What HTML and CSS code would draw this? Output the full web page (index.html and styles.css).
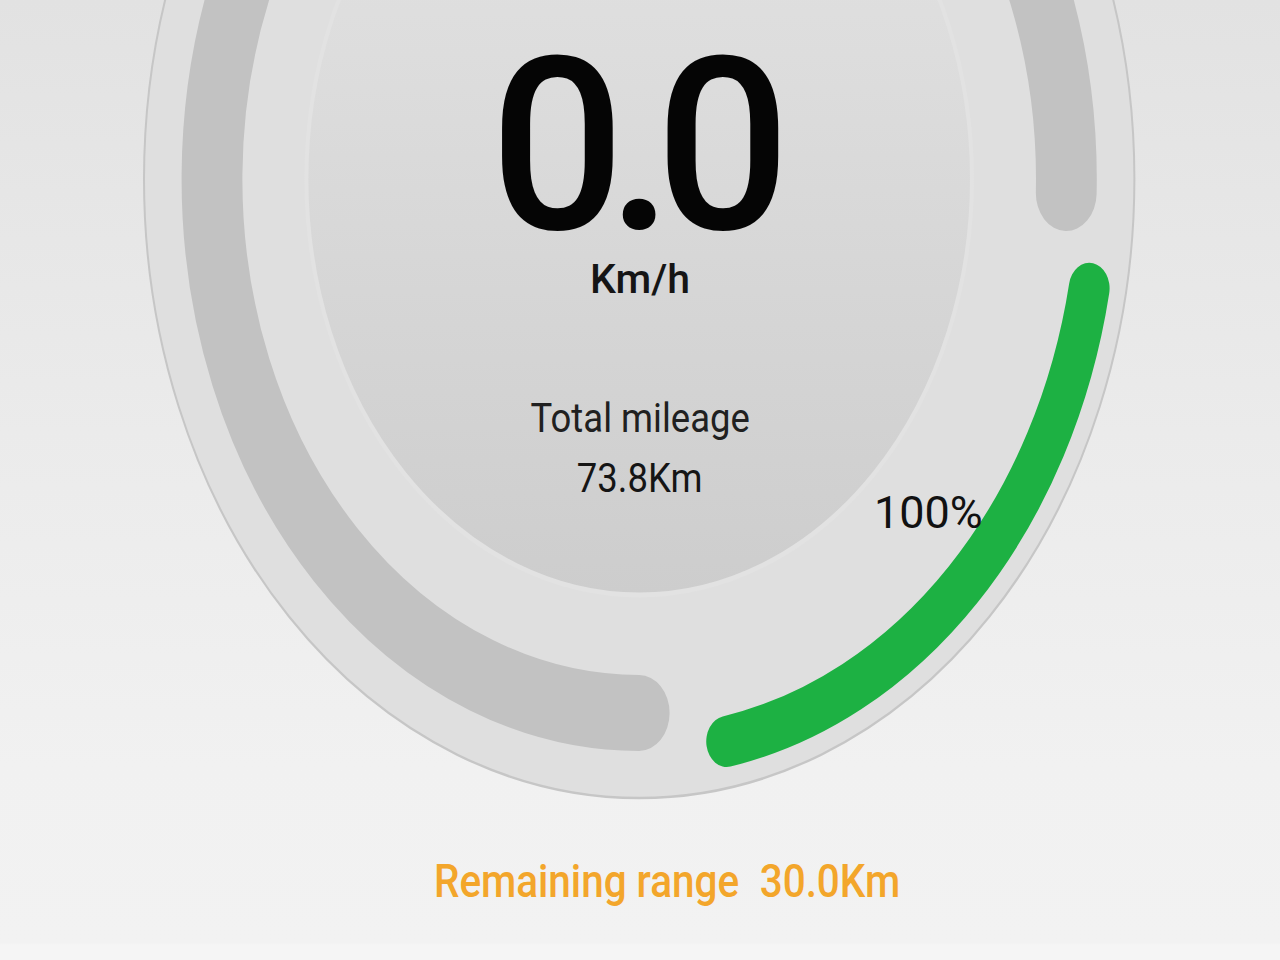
FILE: index.html
```html
<!DOCTYPE html>
<html lang="en">
<head>
  <meta charset="UTF-8">
  <meta name="viewport" content="width=device-width, initial-scale=1.0">
  <title>Speedometer</title>
  <link rel="stylesheet" href="styles.css">
</head>
<body>
  <div class="screen">
    <!-- the dial is drawn as circles, then stretched into the ellipse of the screen -->
    <svg class="dial" viewBox="0 0 1600 960" preserveAspectRatio="none">
      <defs>
        <linearGradient id="face" gradientUnits="userSpaceOnUse" x1="0" y1="-237" x2="0" y2="595">
          <stop offset="0" stop-color="#e4e4e4"/>
          <stop offset="0.35" stop-color="#dddddd"/>
          <stop offset="1" stop-color="#cdcdcd"/>
        </linearGradient>
      </defs>
      <circle class="rim" cx="799" cy="179" r="619"/>
      <path class="track" d="M 799 713 A 534 534 0 1 1 1332.8 193"/>
      <path class="charge" d="M 908.3 741.5 A 573 573 0 0 0 1361.5 288.3"/>
      <circle class="face" cx="799" cy="179" r="416"/>
    </svg>

    <div class="readout">
      <div class="speed">0.0</div>
      <div class="unit">Km/h</div>
      <div class="mileage-label">Total mileage</div>
      <div class="mileage-value">73.8Km</div>
      <div class="range">
        <span>Remaining range</span>
        <span>30.0Km</span>
      </div>
    </div>

    <div class="battery">100%</div>
  </div>
</body>
</html>
```

FILE: styles.css
```css
body {
  margin: 0px;
  font-family: 'Roboto', 'Liberation Sans', sans-serif;
  background-color: #f2f2f2;
}

.screen {
  position: relative;
  display: grid;
  width: 1280px;
  height: 960px;
  overflow: hidden;
  background: linear-gradient(#e2e2e2 0%, #ebebeb 45%, #f1f1f1 80%, #f2f2f2 98.2%, #f5f5f5 98.4%);
}

.dial,
.readout {
  grid-area: 1 / 1;
}

.dial {
  display: block;
  width: 1280px;
  height: 960px;
}

.rim {
  fill: #dfdfdf;
  stroke: #c6c6c6;
  stroke-width: 2.5;
}

.track {
  fill: none;
  stroke: #c2c2c2;
  stroke-width: 76;
  stroke-linecap: round;
}

.charge {
  fill: none;
  stroke: #1db143;
  stroke-width: 51;
  stroke-linecap: round;
}

.face {
  fill: url(#face);
  stroke: #e2e2e2;
  stroke-width: 5;
}

.readout {
  display: flex;
  flex-direction: column;
  align-items: center;
  padding-top: 46px;
}

.speed {
  font-size: 242px;
  font-weight: 500;
  line-height: 200px;
  letter-spacing: -18px;
  padding-right: 18px;
  color: #050505;
  transform: scaleX(0.98);
}

.unit {
  margin-top: 9px;
  font-size: 41px;
  font-weight: 500;
  line-height: 48px;
  color: #151515;
}

.mileage-label {
  margin-top: 91px;
  font-size: 41px;
  line-height: 48px;
  color: #202020;
  transform: scaleX(0.89);
}

.mileage-value {
  margin-top: 12px;
  font-size: 41px;
  line-height: 48px;
  color: #151515;
  transform: scaleX(0.89);
}

.range {
  display: flex;
  gap: 24px;
  margin-top: 352px;
  margin-left: 55px;
  font-size: 47px;
  font-weight: 500;
  line-height: 54px;
  color: #f3a62b;
  transform: scaleX(0.86);
}

.battery {
  position: absolute;
  left: 874px;
  top: 486px;
  font-size: 45px;
  line-height: 54px;
  color: #111111;
}
```
